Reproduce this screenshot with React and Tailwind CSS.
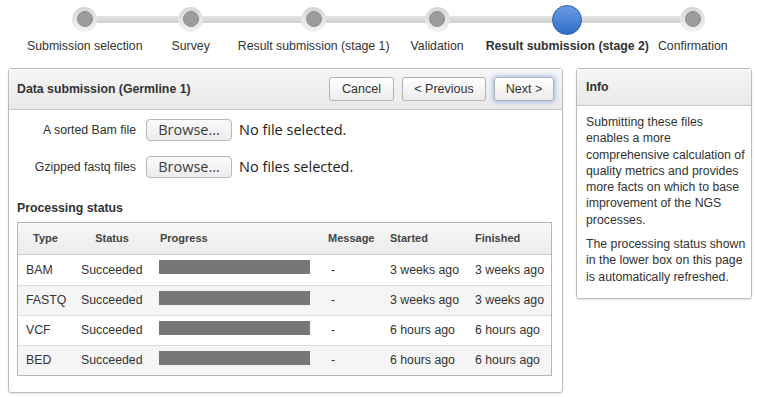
import React from "react";

const steps = [
  { label: "Submission selection", ml: "ml-[27px]" },
  { label: "Survey", ml: "ml-[29px]" },
  { label: "Result submission (stage 1)", ml: "ml-[28px]" },
  { label: "Validation", ml: "ml-[21px]" },
  { label: "Result submission (stage 2)", ml: "ml-[22px]", active: true },
  { label: "Confirmation", ml: "ml-[9px]" },
];

const rows = [
  ["BAM", "3 weeks ago", "3 weeks ago"],
  ["FASTQ", "3 weeks ago", "3 weeks ago"],
  ["VCF", "6 hours ago", "6 hours ago"],
  ["BED", "6 hours ago", "6 hours ago"],
];

const cols = "grid grid-cols-[55px_78px_168px_62px_85px_1fr]";

function Button({ children, focused, w }) {
  return (
    <button
      className={`h-[24px] ${w} rounded-[3px] border border-[#b3b3b3] bg-gradient-to-b from-white to-[#ececec] text-[12.5px] text-[#333] ${
        focused ? "shadow-[0_0_4px_1px_rgba(80,140,230,0.55)]" : ""
      }`}
    >
      {children}
    </button>
  );
}

function Browse() {
  return (
    <button className="h-[22px] w-[86px] rounded-[4px] border border-[#b8b8b8] bg-gradient-to-b from-[#fafafa] to-[#ececec] font-['Open_Sans'] text-[14.5px] leading-none text-[#3c3c3c]">
      Browse...
    </button>
  );
}

export default function App() {
  return (
    <div className="h-[397px] w-[757px] overflow-hidden bg-white font-['Liberation_Sans',Arial,sans-serif] text-[12.3px] text-[#333]">
      {/* Stepper */}
      <div className="relative flex">
        <div className="absolute left-[85px] top-[16px] h-[7px] w-[608px] bg-gradient-to-b from-[#e4e4e4] to-[#cfcfcf]" />
        {steps.map((s) => (
          <div key={s.label} className={`relative flex flex-col items-center ${s.ml}`}>
            <div className="flex h-[38px] items-center justify-center">
              {s.active ? (
                <div className="mt-[2px] h-[30px] w-[30px] rounded-full border border-[#2b5ea8] bg-gradient-to-b from-[#6a9ce6] to-[#2f6cc4]" />
              ) : (
                <div className="flex h-[25px] w-[25px] items-center justify-center rounded-full bg-gradient-to-b from-[#d6d6d6] to-[#f2f2f2]">
                  <div className="h-[16px] w-[16px] rounded-full border border-[#8f8f8f] bg-[#9c9c9c]" />
                </div>
              )}
            </div>
            <div className={`whitespace-nowrap leading-[16px] ${s.active ? "font-bold" : ""}`}>{s.label}</div>
          </div>
        ))}
      </div>

      <div className="mt-[14px] flex items-start gap-[13px] pl-[8px]">
        {/* Main panel */}
        <div className="h-[325px] w-[555px] rounded-[3px] border border-[#bdbdbd] shadow-[0_1px_2px_rgba(0,0,0,0.12)]">
          <div className="flex h-[41px] items-center justify-between border-b border-[#c8c8c8] bg-gradient-to-b from-[#f6f6f6] to-[#e9e9e9] pl-[8px] pr-[8px]">
            <div className="font-bold">Data submission (Germline 1)</div>
            <div className="flex gap-[8px]">
              <Button w="w-[65px]">Cancel</Button>
              <Button w="w-[84px]">&lt; Previous</Button>
              <Button w="w-[60px]" focused>Next &gt;</Button>
            </div>
          </div>
          <div className="flex flex-col gap-[15px] pt-[9px]">
            <div className="flex items-center gap-[10px]">
              <div className="w-[127px] text-right">A sorted Bam file</div>
              <Browse />
              <span className="ml-[-3px] font-['Open_Sans'] text-[14.5px] text-[#222]">No file selected.</span>
            </div>
            <div className="flex items-center gap-[10px]">
              <div className="w-[127px] text-right">Gzipped fastq files</div>
              <Browse />
              <span className="ml-[-3px] font-['Open_Sans'] text-[14.5px] text-[#222]">No files selected.</span>
            </div>
          </div>
          <div className="ml-[8px] mt-[22px] font-bold leading-[16px]">Processing status</div>
          <div className="ml-[8px] mr-[10px] mt-[6px] border border-[#b5b5b5]">
            <div className={`${cols} h-[32px] items-center border-b border-[#cfcfcf] bg-gradient-to-b from-[#f7f7f7] to-[#ececec] text-[11px] font-bold text-[#444]`}>
              <div className="text-center">Type</div>
              <div className="text-center">Status</div>
              <div className="pl-[9px]">Progress</div>
              <div className="pl-[9px]">Message</div>
              <div className="pl-[9px]">Started</div>
              <div className="pl-[9px]">Finished</div>
            </div>
            {rows.map((r, i) => (
              <div
                key={r[0]}
                className={`${cols} h-[30px] items-center ${i > 0 ? "border-t border-[#dcdcdc]" : ""} ${
                  i % 2 === 1 ? "bg-[#f5f5f5]" : "bg-white"
                }`}
              >
                <div className="pl-[8px]">{r[0]}</div>
                <div className="pl-[8px]">Succeeded</div>
                <div className="self-start pl-[8px] pt-[5px]">
                  <div className="h-[14px] w-[151px] bg-[#777]" />
                </div>
                <div className="pl-[12px]">-</div>
                <div className="pl-[9px]">{r[1]}</div>
                <div className="pl-[9px]">{r[2]}</div>
              </div>
            ))}
          </div>
        </div>

        {/* Info panel */}
        <div className="h-[231px] w-[176px] rounded-[3px] border border-[#bdbdbd] shadow-[0_1px_2px_rgba(0,0,0,0.12)]">
          <div className="flex h-[37px] items-center border-b border-[#c8c8c8] bg-gradient-to-b from-[#f6f6f6] to-[#e9e9e9] pl-[9px] font-bold">
            Info
          </div>
          <div className="w-[170px] pl-[9px] pt-[8px] leading-[16.3px]">
            <p>Submitting these files enables a more comprehensive calculation of quality metrics and provides more facts on which to base improvement of the NGS processes.</p>
            <p className="mt-[8px]">The processing status shown in the lower box on this page is automatically refreshed.</p>
          </div>
        </div>
      </div>
    </div>
  );
}
